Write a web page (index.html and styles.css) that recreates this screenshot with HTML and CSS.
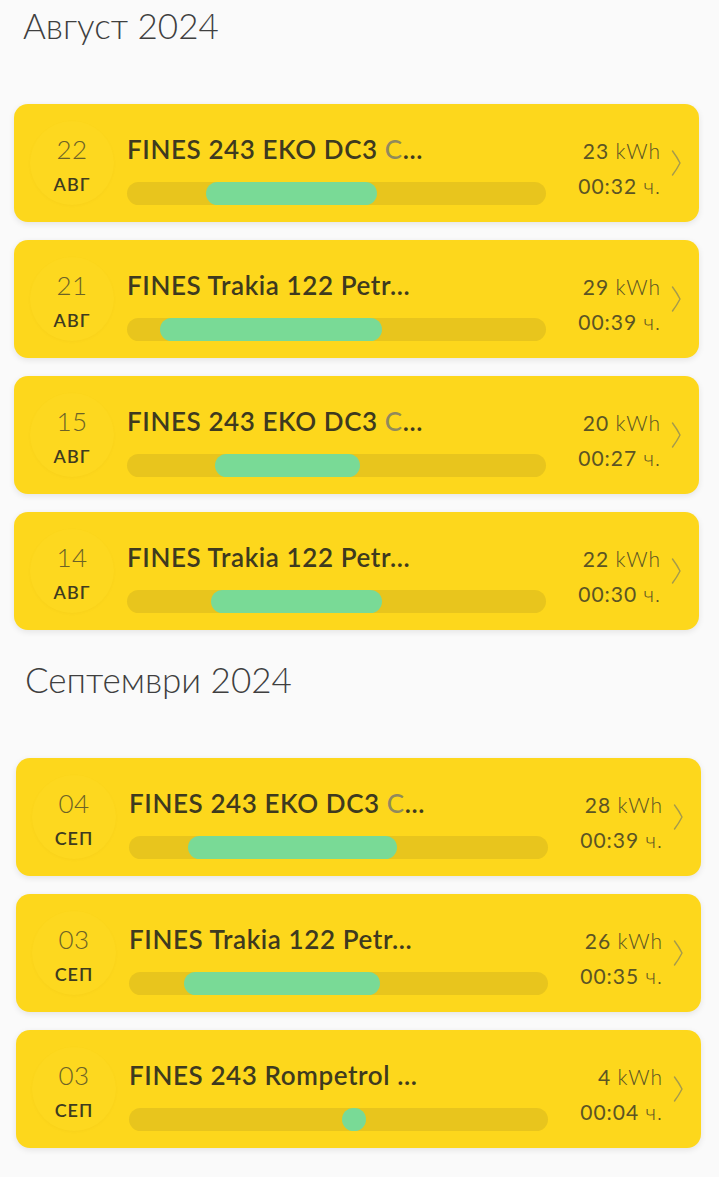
FILE: index.html
```html
<!DOCTYPE html>
<html lang="bg">
<head>
<meta charset="utf-8">
<title>Зареждания</title>
<link rel="stylesheet" href="styles.css">
</head>
<body>
<section class="month">
  <h2 class="month-title">Август 2024</h2>
  <div class="card">
    <div class="date"><span class="day">22</span><span class="mon">АВГ</span></div>
    <div class="main">
      <div class="title">FINES 243 EKO DC3 <span class="sub">C</span>...</div>
      <div class="track"><div class="fill" style="margin-left:79px;width:171px"></div></div>
    </div>
    <div class="stats"><div><span class="num">23</span> <span class="unit">kWh</span></div><div><span class="num">00:32</span> <span class="unit">ч.</span></div></div>
    <svg class="chev" viewBox="0 0 12 28" width="12" height="28"><path d="M2.5 2 Q7 8 10 14 Q7 20 2.5 26"/></svg>
  </div>
  <div class="card">
    <div class="date"><span class="day">21</span><span class="mon">АВГ</span></div>
    <div class="main">
      <div class="title">FINES Trakia 122 Petr...</div>
      <div class="track"><div class="fill" style="margin-left:33px;width:222px"></div></div>
    </div>
    <div class="stats"><div><span class="num">29</span> <span class="unit">kWh</span></div><div><span class="num">00:39</span> <span class="unit">ч.</span></div></div>
    <svg class="chev" viewBox="0 0 12 28" width="12" height="28"><path d="M2.5 2 Q7 8 10 14 Q7 20 2.5 26"/></svg>
  </div>
  <div class="card">
    <div class="date"><span class="day">15</span><span class="mon">АВГ</span></div>
    <div class="main">
      <div class="title">FINES 243 EKO DC3 <span class="sub">C</span>...</div>
      <div class="track"><div class="fill" style="margin-left:88px;width:145px"></div></div>
    </div>
    <div class="stats"><div><span class="num">20</span> <span class="unit">kWh</span></div><div><span class="num">00:27</span> <span class="unit">ч.</span></div></div>
    <svg class="chev" viewBox="0 0 12 28" width="12" height="28"><path d="M2.5 2 Q7 8 10 14 Q7 20 2.5 26"/></svg>
  </div>
  <div class="card">
    <div class="date"><span class="day">14</span><span class="mon">АВГ</span></div>
    <div class="main">
      <div class="title">FINES Trakia 122 Petr...</div>
      <div class="track"><div class="fill" style="margin-left:84px;width:171px"></div></div>
    </div>
    <div class="stats"><div><span class="num">22</span> <span class="unit">kWh</span></div><div><span class="num">00:30</span> <span class="unit">ч.</span></div></div>
    <svg class="chev" viewBox="0 0 12 28" width="12" height="28"><path d="M2.5 2 Q7 8 10 14 Q7 20 2.5 26"/></svg>
  </div>
</section>
<section class="month month--shift">
  <h2 class="month-title">Септември 2024</h2>
  <div class="card">
    <div class="date"><span class="day">04</span><span class="mon">СЕП</span></div>
    <div class="main">
      <div class="title">FINES 243 EKO DC3 <span class="sub">C</span>...</div>
      <div class="track"><div class="fill" style="margin-left:59px;width:209px"></div></div>
    </div>
    <div class="stats"><div><span class="num">28</span> <span class="unit">kWh</span></div><div><span class="num">00:39</span> <span class="unit">ч.</span></div></div>
    <svg class="chev" viewBox="0 0 12 28" width="12" height="28"><path d="M2.5 2 Q7 8 10 14 Q7 20 2.5 26"/></svg>
  </div>
  <div class="card">
    <div class="date"><span class="day">03</span><span class="mon">СЕП</span></div>
    <div class="main">
      <div class="title">FINES Trakia 122 Petr...</div>
      <div class="track"><div class="fill" style="margin-left:55px;width:196px"></div></div>
    </div>
    <div class="stats"><div><span class="num">26</span> <span class="unit">kWh</span></div><div><span class="num">00:35</span> <span class="unit">ч.</span></div></div>
    <svg class="chev" viewBox="0 0 12 28" width="12" height="28"><path d="M2.5 2 Q7 8 10 14 Q7 20 2.5 26"/></svg>
  </div>
  <div class="card">
    <div class="date"><span class="day">03</span><span class="mon">СЕП</span></div>
    <div class="main">
      <div class="title">FINES 243 Rompetrol ...</div>
      <div class="track"><div class="fill" style="margin-left:213px;width:24px"></div></div>
    </div>
    <div class="stats"><div><span class="num">4</span> <span class="unit">kWh</span></div><div><span class="num">00:04</span> <span class="unit">ч.</span></div></div>
    <svg class="chev" viewBox="0 0 12 28" width="12" height="28"><path d="M2.5 2 Q7 8 10 14 Q7 20 2.5 26"/></svg>
  </div>
</section>
</body>
</html>
```

FILE: styles.css
```css
* { box-sizing: border-box; }

body {
  margin: 0;
  background: #fafafa;
  font-family: Lato, "Open Sans", "DejaVu Sans", sans-serif;
  color: #3e3a1f;
}

.month {
  padding-top: 3px;
}

.month + .month {
  padding-top: 9px;
}

.month--shift {
  margin-left: 2px;
  margin-right: -2px;
}

.month-title {
  margin: 0 0 57px;
  padding-left: 23px;
  font-size: 35px;
  line-height: 44px;
  font-weight: 300;
  color: #3f3f3f;
}

.card {
  display: flex;
  height: 118px;
  margin: 0 20px 18px 14px;
  padding: 0 17px 0 16px;
  background: #fdd71c;
  border-radius: 14px;
  box-shadow: 0 2px 6px rgba(0, 0, 0, 0.09);
}

.date {
  flex: none;
  align-self: center;
  width: 84px;
  height: 84px;
  border-radius: 50%;
  background: #fdd81f;
  box-shadow: 0 1px 3px rgba(120, 100, 0, 0.04);
  display: flex;
  flex-direction: column;
  align-items: center;
  padding-top: 13px;
  gap: 10px;
}

.day {
  font-size: 26px;
  line-height: 30px;
  font-weight: 300;
  color: #6c6226;
  letter-spacing: 0.5px;
}

.mon {
  font-size: 18px;
  line-height: 20px;
  font-weight: 600;
  color: #3f3b1f;
  letter-spacing: 1px;
}

.main {
  flex: none;
  width: 419px;
  margin-left: 13px;
  padding-top: 30px;
}

.title {
  font-size: 26px;
  line-height: 30px;
  font-weight: 600;
  letter-spacing: 0.6px;
  color: #3e3a1f;
  white-space: nowrap;
  overflow: hidden;
}

.sub {
  color: #918a5c;
  font-weight: 500;
}

.track {
  display: flex;
  height: 23px;
  margin-top: 18px;
  border-radius: 12px;
  background: #e8c51d;
}

.fill {
  height: 23px;
  border-radius: 12px;
  background: #79da96;
}

.stats {
  flex: 1;
  padding-top: 29px;
  text-align: right;
  font-size: 21px;
  line-height: 35px;
  letter-spacing: 1px;
  color: #5b5424;
}

.num {
  font-weight: 400;
}

.unit {
  font-weight: 300;
}

.chev {
  flex: none;
  align-self: center;
  margin: 0 0 0 9px;
  fill: none;
  stroke: #a59a4c;
  stroke-width: 1.4;
  stroke-linecap: round;
  stroke-linejoin: round;
}
```
